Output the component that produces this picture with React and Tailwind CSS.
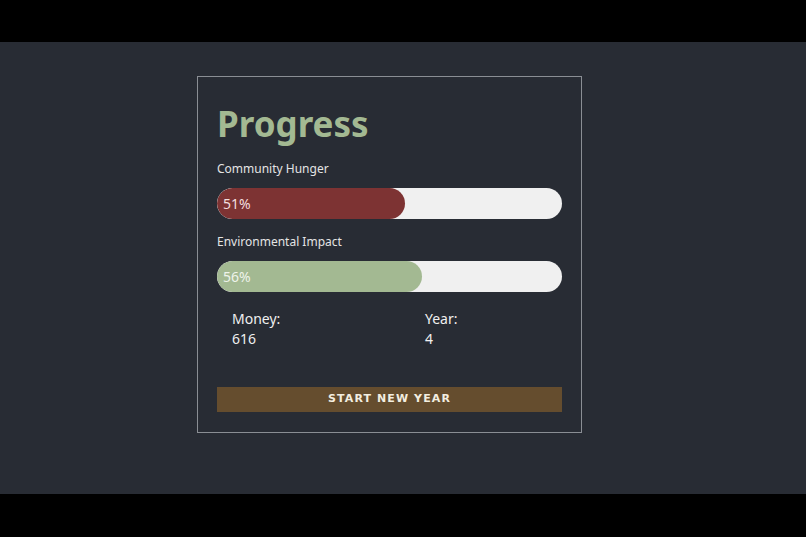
import React from "react";

const bars = [
  { label: "Community Hunger", value: 51, fill: "bg-[#7d3333]", text: "text-[#f3dede]" },
  { label: "Environmental Impact", value: 56, fill: "bg-[#a3b992]", text: "text-[#eef3ea]" },
];

function Bar({ label, value, fill, text }) {
  return (
    <div>
      <p className="text-[12px] text-[#e4e4e4] leading-none mb-[13px]">{label}</p>
      <div className="h-[31px] w-full rounded-full bg-[#f0f0f0] overflow-hidden">
        <div
          className={`box-content h-full px-1.5 rounded-full flex items-center ${fill}`}
          style={{ width: `${value}%` }}
        >
          <span className={`text-[14px] ${text}`}>{value}%</span>
        </div>
      </div>
    </div>
  );
}

export default function App() {
  return (
    <div className="w-[806px] h-[537px] bg-black flex flex-col" style={{ fontFamily: '"Noto Sans", "Open Sans", sans-serif' }}>
      <div className="mt-[42px] h-[452px] bg-[#282c34] pt-[34px] pl-[197px]">
        <div className="w-[385px] h-[357px] border border-[#8a8e94] px-[19px] pt-[29px]">
          <h1 className="text-[35px] font-bold text-[#a3b992] leading-none mb-[22px]">Progress</h1>
          <div className="flex flex-col gap-[17px]">
            {bars.map((b) => (
              <Bar key={b.label} {...b} />
            ))}
          </div>
          <div className="grid grid-cols-[193px_1fr] pl-[15px] mt-[17px] text-[14px] text-[#f0f0f0] leading-[20px]">
            <div>
              <p>Money:</p>
              <p>616</p>
            </div>
            <div>
              <p>Year:</p>
              <p>4</p>
            </div>
          </div>
          <button
            className="mt-[38px] w-full h-[25px] bg-[#654d2e] text-[#f3eee0] text-[11px] font-bold tracking-[1.1px] flex items-center justify-center"
            style={{ fontFamily: '"DejaVu Sans", Verdana, sans-serif' }}
          >
            START NEW YEAR
          </button>
        </div>
      </div>
    </div>
  );
}
